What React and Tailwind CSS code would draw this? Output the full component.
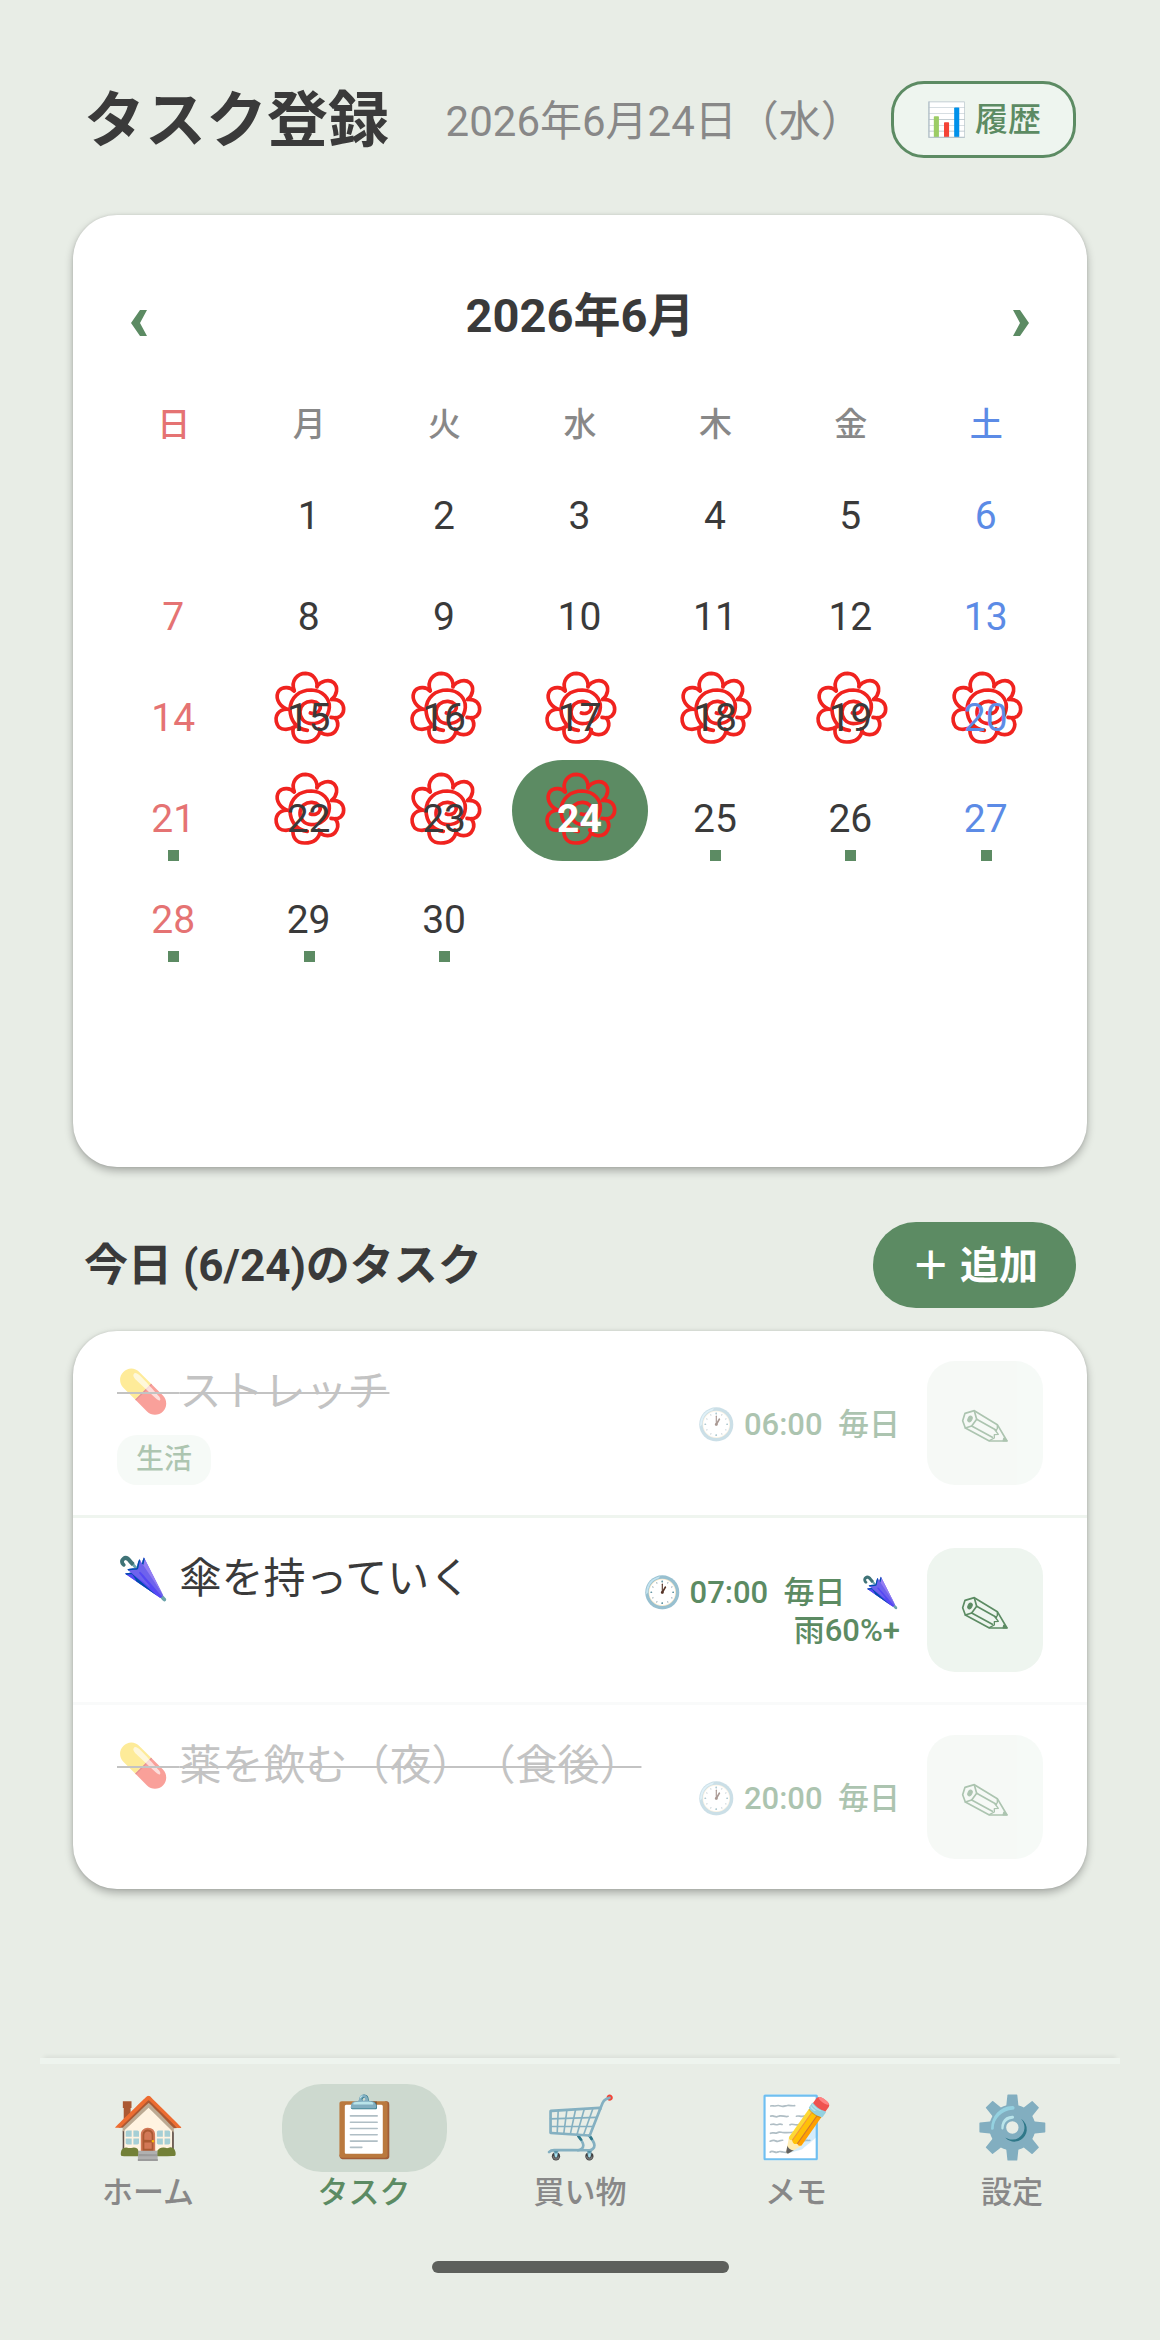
import { useState } from "react";

const WEEKDAYS = ["日", "月", "火", "水", "木", "金", "土"];

const WEEKS = [
  [null, 1, 2, 3, 4, 5, 6],
  [7, 8, 9, 10, 11, 12, 13],
  [14, 15, 16, 17, 18, 19, 20],
  [21, 22, 23, 24, 25, 26, 27],
  [28, 29, 30, null, null, null, null],
  [null, null, null, null, null, null, null],
];

const FLOWER_DAYS = [15, 16, 17, 18, 19, 20, 22, 23, 24];
const TASK_DAYS = [21, 25, 26, 27, 28, 29, 30];

const TASKS = [
  { id: 1, icon: "💊", title: "ストレッチ", tag: "生活", meta: "06:00  毎日", done: true, border: "border-b-[3px] border-[#eff5ef]" },
  { id: 2, icon: "🌂", title: "傘を持っていく", meta: "07:00  毎日  🌂 雨60%+", done: false, border: "border-b-[3px] border-[#f9fafa]" },
  { id: 3, icon: "💊", title: "薬を飲む（夜）（食後）", meta: "20:00  毎日", done: true, border: "" },
];

const TABS = [
  { id: "home", icon: "🏠", label: "ホーム" },
  { id: "task", icon: "📋", label: "タスク" },
  { id: "shopping", icon: "🛒", label: "買い物" },
  { id: "memo", icon: "📝", label: "メモ" },
  { id: "settings", icon: "⚙️", label: "設定" },
];

function weekdayColor(i, base) {
  if (i === 0) return "text-[#e57373]";
  if (i === 6) return "text-[#5c8be6]";
  return base;
}

function Flower() {
  return (
    <svg className="absolute inset-0 m-auto w-20 h-20" viewBox="28 31 240 240" fill="none" stroke="#f0231f" strokeWidth="11" strokeLinecap="round" strokeLinejoin="round">
      <path d="M104 93C92 64 113 41 138 41C160 42 174 60 172 82" />
      <path d="M172 80C183 64 208 57 222 69C237 83 232 106 216 119" />
      <path d="M216 119C240 118 252 130 252 149C252 167 238 178 214 173" />
      <path d="M226 174C244 194 230 226 203 225C191 225 182 219 177 208" />
      <path d="M182 210C178 236 160 247 135 247C110 247 96 230 101 203" />
      <path d="M107 201C86 213 60 212 53 195C42 170 56 147 86 149" />
      <path d="M80 148C54 136 46 110 58 93C70 79 93 82 103 94" />
      <path d="M143 212C110 208 92 182 91 150C92 112 120 91 155 91C190 92 210 117 209 143C207 173 185 192 155 192C132 191 120 173 121 156C122 136 138 124 157 125C176 127 185 138 181 148C177 160 164 164 152 160" />
    </svg>
  );
}

function Pencil() {
  return (
    <svg className="w-12 h-9" viewBox="1087 620 144 108" fill="none" stroke="currentColor" strokeWidth="5" strokeLinejoin="round" strokeLinecap="round">
      <path d="M1099 636L1127 628L1196 670L1225 719H1172L1100 680L1092 658Z" />
      <path d="M1127 629L1134 654L1119 674L1100 680" />
      <path d="M1134 654L1193 687M1119 674L1181 708" />
      <path d="M1196 670L1196 683L1189 686L1199 699L1187 700L1187 710L1172 718" strokeWidth="4" />
      <ellipse cx="1114" cy="653" rx="6" ry="9" transform="rotate(25 1114 653)" fill="currentColor" strokeWidth="3" />
      <path d="M1216 711L1224 718H1214Z" fill="currentColor" />
    </svg>
  );
}

function Calendar() {
  const [selected, setSelected] = useState(24);

  return (
    <section className="bg-white rounded-[44px] px-[33px] pt-[67px] pb-[104px] shadow-[0_4px_9px_rgba(0,0,0,0.28),0_0_3px_rgba(0,0,0,0.1)]">
      <div className="flex items-center justify-between px-[25px] h-[66px]">
        <button type="button" aria-label="前の月" className="pt-4 text-[#5c8b63]">
          <svg className="w-4 h-[26px]" viewBox="0 0 16 26" fill="currentColor"><path d="M9 0H16L9 13L16 26H9L0 13Z" /></svg>
        </button>
        <h2 className="text-[47px] leading-[66px] pt-px font-bold">2026年6月</h2>
        <button type="button" aria-label="次の月" className="pt-4 text-[#5c8b63]">
          <svg className="w-4 h-[26px]" viewBox="0 0 16 26" fill="currentColor"><path d="M7 0H0L7 13L0 26H7L16 13Z" /></svg>
        </button>
      </div>

      <table className="w-full table-fixed border-collapse mt-11">
        <thead>
          <tr className="h-[65px]">
            {WEEKDAYS.map((d, i) => (
              <th key={d} className={`p-0 align-top text-[33px] leading-[65px] font-medium ${weekdayColor(i, "text-[#888888]")}`}>{d}</th>
            ))}
          </tr>
        </thead>
        <tbody>
          {WEEKS.map((week, w) => (
            <tr key={w} className="h-[101px]">
              {week.map((day, i) => (
                <td key={i} className="p-0 h-[101px]">
                  {day && (
                    <button
                      type="button"
                      onClick={() => setSelected(day)}
                      className={`relative block w-full h-[101px] rounded-[51px] ${day === selected ? "bg-[#5c8b63] text-white font-bold" : weekdayColor(i, "")}`}
                    >
                      {FLOWER_DAYS.includes(day) && <Flower />}
                      <span className="relative block pt-4 pr-px text-[39px] leading-[87px]">{day}</span>
                      {TASK_DAYS.includes(day) && <span className="absolute bottom-0 inset-x-0 mx-auto w-[11px] h-[11px] bg-[#5c8b63]" />}
                    </button>
                  )}
                </td>
              ))}
            </tr>
          ))}
        </tbody>
      </table>
    </section>
  );
}

function TaskRow({ task }) {
  return (
    <li className={task.border}>
      <div className={`flex px-[44px] py-[30px] ${task.done ? "opacity-50" : ""}`}>
        <div className="flex-1 min-w-0">
          <p className={`text-[42px] leading-[61px] whitespace-nowrap [text-spacing-trim:space-all] ${task.done ? "text-[#888888] line-through decoration-2" : ""}`}>
            {task.icon} {task.title}
          </p>
          {task.tag && (
            <span className="inline-block mt-[13px] px-[19px] rounded-[20px] bg-[#eef5ef] text-[28px] leading-[50px] font-medium text-[#5c8b63]">{task.tag}</span>
          )}
        </div>
        <p className="self-center shrink-0 pt-[3px] max-w-[264px] text-right text-[31px] leading-[38px] font-medium text-[#5c8b63] whitespace-pre-wrap">
          {`🕐 ${task.meta}`}
        </p>
        <button type="button" aria-label={`${task.title}を編集`} className="shrink-0 ml-[27px] pt-[6px] w-[116px] h-[124px] rounded-[28px] bg-[#eef5ef] text-[#5c8b63] flex items-center justify-center">
          <Pencil />
        </button>
      </div>
    </li>
  );
}

export default function App() {
  const [tab, setTab] = useState("task");

  return (
    <div lang="ja" className="min-h-screen flex flex-col bg-[#e8ede6] text-[#3a3a3a] font-['Roboto','Noto_Sans_CJK_JP',sans-serif]">
      <main className="flex-1 px-[73px] pt-[81px]">

        {/* Header */}
        <header className="flex items-center px-[11px] mb-[57px]">
          <h1 className="pt-1 text-[61px] leading-[73px] font-bold">タスク登録</h1>
          <p className="ml-auto pt-[3px] text-[42px] text-[#888888]">2026年6月24日（水）</p>
          <button type="button" className="ml-7 h-[77px] px-8 rounded-[33px] border-[3px] border-[#5c8b63] bg-[#eef5ef] text-[33px] font-medium text-[#5c8b63]">
            📊 履歴
          </button>
        </header>

        <Calendar />

        {/* Today's tasks */}
        <div className="flex items-center justify-between px-[11px] mt-[55px] mb-[23px]">
          <h2 className="pt-[2px] text-[44px] font-bold">今日 (6/24)のタスク</h2>
          <button type="button" className="h-[86px] pt-[2px] px-[38px] rounded-full bg-[#5c8b63] text-[39px] font-bold text-white">＋ 追加</button>
        </div>
        <ul className="bg-white rounded-[44px] overflow-hidden shadow-[0_4px_9px_rgba(0,0,0,0.28),0_0_3px_rgba(0,0,0,0.1)]">
          {TASKS.map((t) => (
            <TaskRow key={t.id} task={t} />
          ))}
        </ul>
      </main>

      {/* Bottom tabs */}
      <nav className="mx-10 mt-20 pt-5 border-t-[6px] border-[#eef4ee] flex shadow-[0_-6px_4px_-4px_rgba(0,0,0,0.06)]">
        {TABS.map((t) => (
          <button key={t.id} type="button" onClick={() => setTab(t.id)} className={`flex-1 flex flex-col items-center ${t.id === tab ? "text-[#5c8b63]" : "text-[#888888]"}`}>
            <span className={`w-[165px] h-[88px] rounded-[40px] flex items-center justify-center text-[60px] leading-none ${t.id === tab ? "bg-[#cdd9cf]" : ""}`}>{t.icon}</span>
            <span className="text-[31px] leading-[41px] font-medium">{t.label}</span>
          </button>
        ))}
      </nav>
      <div className="mx-auto mt-12 mb-[67px] w-[297px] h-3 rounded-full bg-[#5d605c]" />
    </div>
  );
}
